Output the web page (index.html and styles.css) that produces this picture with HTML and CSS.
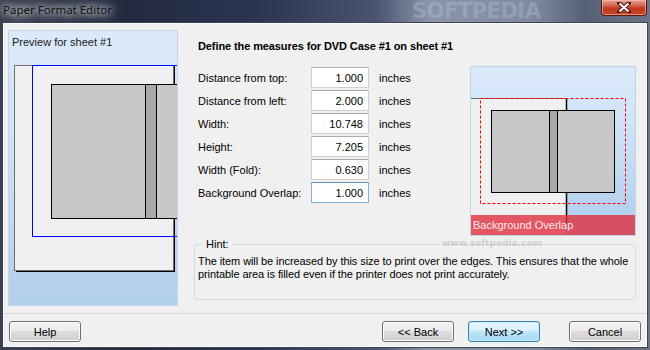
FILE: index.html
```html
<!DOCTYPE html>
<html lang="en">
<head>
    <meta charset="UTF-8">
    <title>Paper Format Editor</title>
    <link rel="stylesheet" href="styles.css">
</head>
<body>

<div class="window">
    <div class="titlebar">
        <span class="title">Paper Format Editor</span>
        <span class="watermark wm-title">SOFTPEDIA</span>
        <button class="close" aria-label="Close">
            <svg width="14" height="11" viewBox="0 0 14 11">
                <path d="M2 1 L12 10 M12 1 L2 10" stroke="#4a1a12" stroke-width="4" stroke-linecap="square"/>
                <path d="M2.5 1.5 L11.5 9.5 M11.5 1.5 L2.5 9.5" stroke="#ffffff" stroke-width="2.2"/>
            </svg>
        </button>
    </div>

    <div class="client">
        <div class="main">
            <!-- sheet preview on the left -->
            <div class="sheet-panel">
                <div class="panel-title">Preview for sheet #1</div>
                <svg class="sheet-drawing" width="168" height="256">
                    <rect x="5.5" y="16.5" width="159" height="205" fill="#f0f0f0" stroke="#6e6e6e"/>
                    <path d="M165.5 17 V223 M7 222.5 H166" stroke="#000" fill="none"/>
                    <rect x="23.5" y="16.5" width="200" height="171" fill="none" stroke="#0000ff"/>
                    <rect x="42.5" y="35.5" width="200" height="134" fill="#c8c8c8" stroke="#000"/>
                    <rect x="136.5" y="35.5" width="11" height="134" fill="#a9a9a9" stroke="#000"/>
                </svg>
            </div>

            <div class="editor">
                <h1>Define the measures for DVD Case #1 on sheet #1</h1>

                <div class="editor-row">
                    <div class="fields">
                        <div class="field">
                            <label>Distance from top:</label>
                            <input type="text" value="1.000">
                            <span class="unit">inches</span>
                        </div>
                        <div class="field">
                            <label>Distance from left:</label>
                            <input type="text" value="2.000">
                            <span class="unit">inches</span>
                        </div>
                        <div class="field">
                            <label>Width:</label>
                            <input type="text" value="10.748">
                            <span class="unit">inches</span>
                        </div>
                        <div class="field">
                            <label>Height:</label>
                            <input type="text" value="7.205">
                            <span class="unit">inches</span>
                        </div>
                        <div class="field">
                            <label>Width (Fold):</label>
                            <input type="text" value="0.630">
                            <span class="unit">inches</span>
                        </div>
                        <div class="field">
                            <label>Background Overlap:</label>
                            <input type="text" value="1.000" class="active">
                            <span class="unit">inches</span>
                        </div>
                    </div>

                    <!-- small preview of the overlap -->
                    <div class="overlap-preview">
                        <svg width="164" height="168">
                            <rect x="0" y="31" width="95" height="137" fill="#f0f0f0"/>
                            <path d="M0 31.5 H95" stroke="#6e6e6e"/>
                            <path d="M95.5 31 V157" stroke="#000" stroke-width="1.5"/>
                            <rect x="9.5" y="31.5" width="145" height="105" fill="none" stroke="#ff0000" stroke-dasharray="3,2"/>
                            <rect x="20.5" y="43.5" width="123" height="82" fill="#c8c8c8" stroke="#000"/>
                            <rect x="78.5" y="43.5" width="8" height="82" fill="#a9a9a9" stroke="#000"/>
                        </svg>
                        <div class="overlap-label">Background Overlap</div>
                    </div>
                </div>

                <fieldset class="hint">
                    <legend>Hint:</legend>
                    <p>The item will be increased by this size to print over the edges. This ensures that the whole printable area is filled even if the printer does not print accurately.</p>
                </fieldset>
            </div>
        </div>

        <div class="footer">
            <button class="btn">Help</button>
            <button class="btn back">&lt;&lt; Back</button>
            <button class="btn next default">Next &gt;&gt;</button>
            <button class="btn cancel">Cancel</button>
        </div>
    </div>
</div>

<span class="watermark wm-url">www.softpedia.com</span>

</body>
</html>
```

FILE: styles.css
```css
body {
    margin: 0;
    width: 650px;
    height: 350px;
    overflow: hidden;
    position: relative;
    font-family: "Liberation Sans", Arial, sans-serif;
    font-size: 11px;
    color: #000;
    background: linear-gradient(90deg, #3a3f52 0%, #222a40 20%, #2c3652 40%, #4b5572 58%, #8a95aa 66%, #7f8aa0 82%, #566076 90%, #6c7386 100%);
}

.window {
    display: flex;
    flex-direction: column;
    height: 350px;
}

/* title bar */
.titlebar {
    height: 22px;
    display: flex;
    align-items: flex-start;
    position: relative;
}

.title {
    padding-left: 3px;
    line-height: 20px;
    font-family: "Noto Sans", "Open Sans", sans-serif;
    font-size: 11.5px;
    color: #111;
    text-shadow: 0 0 6px #e2e2e2, 0 0 10px #d8d8d8, 0 0 14px #cfcfcf;
}

.close {
    margin-left: auto;
    margin-right: 3px;
    width: 46px;
    height: 16px;
    padding: 0;
    border: 1px solid #5a1c12;
    border-top: none;
    border-radius: 0 0 4px 4px;
    background: linear-gradient(#e9a08e 0%, #d46a53 35%, #c2381f 55%, #c9452b 100%);
    box-shadow: inset 0 0 0 1px rgba(255, 210, 200, 0.5);
    display: flex;
    align-items: center;
    justify-content: center;
}

.watermark {
    position: absolute;
    font-family: "DejaVu Sans", sans-serif;
    font-weight: bold;
    pointer-events: none;
}

.wm-title {
    left: 412px;
    top: 0;
    font-size: 21px;
    line-height: 22px;
    letter-spacing: -0.5px;
    color: rgba(200, 210, 228, 0.3);
}

.wm-url {
    left: 442px;
    top: 238px;
    font-size: 9px;
    color: rgba(150, 150, 150, 0.35);
}

/* dialog area */
.client {
    flex: 1;
    margin: 0 2px 2px;
    border: 1px solid #3f4454;
    box-shadow: inset 0 0 0 1px #fbfbfb;
    background-color: #f0f0f0;
    padding: 7px 0 0 5px;
    display: flex;
    flex-direction: column;
}

.main {
    display: flex;
    height: 276px;
}

.sheet-panel {
    width: 170px;
    box-sizing: border-box;
    border: 1px solid #c6d6e9;
    background: linear-gradient(#dbe9fa 0%, #d2e4f6 35%, #b0cfec 100%);
    overflow: hidden;
}

.panel-title {
    padding: 5px 0 0 3px;
    line-height: 13px;
    color: #1a1a1a;
}

.sheet-drawing {
    display: block;
}

.editor {
    margin-left: 16px;
    width: 442px;
}

.editor h1 {
    margin: 9px 0 0 4px;
    font-size: 11px;
    line-height: 14px;
    font-weight: bold;
    letter-spacing: -0.1px;
}

.editor-row {
    margin-top: 13px;
    display: flex;
    justify-content: space-between;
}

.fields {
    padding: 1px 0 0 4px;
    display: flex;
    flex-direction: column;
    gap: 2px;
}

.field {
    display: flex;
    align-items: center;
    height: 21px;
}

.field label {
    width: 113px;
}

.field input {
    width: 58px;
    height: 21px;
    box-sizing: border-box;
    border: 1px solid #cfcfcf;
    border-top-color: #ababab;
    background-color: white;
    padding: 0 5px 0 0;
    text-align: right;
    font-family: inherit;
    font-size: 11px;
    color: #000;
}

.field input.active {
    border-color: #7faed9;
    border-top-color: #5d8fc2;
}

.unit {
    margin-left: 10px;
}

.overlap-preview {
    width: 166px;
    height: 170px;
    box-sizing: border-box;
    border: 1px solid #c3d3e6;
    background: linear-gradient(#dbeafb 0%, #cde1f6 40%, #adcdec 100%);
    position: relative;
    overflow: hidden;
}

.overlap-preview svg {
    display: block;
}

.overlap-label {
    position: absolute;
    left: 0;
    right: 0;
    bottom: 0;
    height: 20px;
    line-height: 21px;
    padding-left: 2px;
    background-color: rgba(224, 48, 62, 0.8);
    color: #fde9ea;
}

.hint {
    margin: 2px 0 0;
    padding: 4px 1px 18px 3px;
    border: 1px solid #d3dbe1;
    border-radius: 3px;
}

.hint legend {
    margin-left: 4px;
    padding: 0 3px 0 4px;
    line-height: 13px;
}

.hint p {
    margin: 0;
    line-height: 13px;
    letter-spacing: -0.08px;
}

/* buttons along the bottom */
.footer {
    margin: 7px 0 0 -5px;
    border-top: 1px solid #d8d8d8;
    padding: 7px 6px 0;
    display: flex;
}

.btn {
    width: 72px;
    height: 21px;
    padding: 0;
    border: 1px solid #707070;
    border-radius: 3px;
    background: linear-gradient(#f2f2f2 0%, #ebebeb 50%, #dddddd 50%, #cfcfcf 100%);
    box-shadow: inset 0 0 0 1px #fcfcfc;
    font-family: inherit;
    font-size: 11px;
    color: #000;
}

.btn.back {
    margin-left: auto;
}

.btn.next {
    margin-left: 14px;
    border-color: #3c7fb1;
    background: linear-gradient(#eaf6fd 0%, #d9f0fc 50%, #bee6fd 50%, #a7d9f5 100%);
    box-shadow: inset 0 0 0 1px #c4ecff;
}

.btn.cancel {
    margin-left: 29px;
}
```
